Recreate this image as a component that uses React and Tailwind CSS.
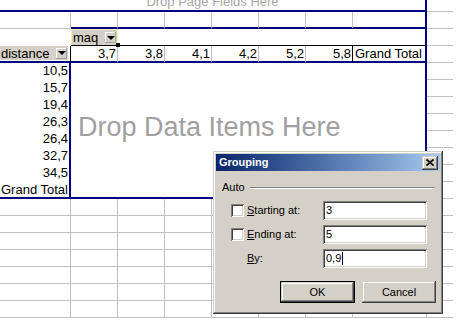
import React from 'react'

const rowValues = ['10,5', '15,7', '19,4', '26,3', '26,4', '32,7', '34,5']
const colValues = ['3,7', '3,8', '4,1', '4,2', '5,2', '5,8']

function Arrow() {
  return <span className="w-0 h-0 border-x-[4px] border-x-transparent border-t-[4px] border-t-black" />
}

function FieldButton({ label, className }) {
  return (
    <div className={`bg-[#d4d0c8] flex items-center justify-between text-[13px] leading-[15px] ${className}`}>
      <span className="pl-[1px]">{label}</span>
      <span className="w-[11px] h-[11px] mr-[1px] flex items-center justify-center shadow-[inset_-1px_-1px_#a0a0a0,inset_1px_1px_#ffffff]">
        <Arrow />
      </span>
    </div>
  )
}

const raised = 'shadow-[inset_-1px_-1px_#404040,inset_1px_1px_#d4d0c8,inset_-2px_-2px_#808080,inset_2px_2px_#ffffff]'
const sunken = 'shadow-[inset_1px_1px_#808080,inset_-1px_-1px_#ffffff,inset_2px_2px_#404040,inset_-2px_-2px_#d4d0c8]'

function Field({ label, u, value, check, caret }) {
  return (
    <div className="flex items-center h-[19px]">
      <div className="w-[15px]" />
      {check ? <div className={`w-[13px] h-[13px] bg-white ${sunken}`} /> : <div className="w-[13px]" />}
      <div className="w-[79px] pl-[3px]">
        <span className="underline">{u}</span>
        {label}
      </div>
      <div className={`w-[104px] h-[19px] bg-white flex items-center pl-[3px] ${sunken}`}>
        <span>{value}</span>
        {caret && <span className="w-[1px] h-[13px] bg-black ml-[1px]" />}
      </div>
    </div>
  )
}

function Grouping() {
  return (
    <div className={`absolute left-[213px] top-[151px] w-[230px] h-[163px] bg-[#d4d0c8] p-[3px] flex flex-col font-['Liberation_Sans',Arial,sans-serif] text-[11px] leading-[13px] text-black ${raised}`}>
      <div className="h-[17px] flex items-center justify-between pl-[3px] pr-[2px] bg-linear-to-r from-[#0a246a] to-[#a6caf0]">
        <span className="text-white font-bold">Grouping</span>
        <div className={`w-[16px] h-[14px] bg-[#d4d0c8] flex items-center justify-center ${raised}`}>
          <svg width="8" height="7" viewBox="0 0 8 7">
            <path d="M0.5 0.5 L7.5 6.5 M7.5 0.5 L0.5 6.5" stroke="black" strokeWidth="1.7" />
          </svg>
        </div>
      </div>
      <div className="flex items-center mt-[10px] pl-[6px] pr-[5px]">
        <span>Auto</span>
        <div className="flex-1 ml-[5px] h-[2px] border-t border-t-[#808080] border-b border-b-white" />
      </div>
      <div className="mt-[7px] flex flex-col gap-[5px]">
        <Field check u="S" label="tarting at:" value="3" />
        <Field check u="E" label="nding at:" value="5" />
        <Field u="B" label="y:" value="0,9" caret />
      </div>
      <div className="flex mt-[13px] pl-[64px] gap-[7px]">
        <div className="w-[75px] h-[22px] border border-black">
          <div className={`w-full h-full bg-[#d4d0c8] flex items-center justify-center ${raised}`}>OK</div>
        </div>
        <div className={`w-[74px] h-[22px] bg-[#d4d0c8] flex items-center justify-center ${raised}`}>Cancel</div>
      </div>
    </div>
  )
}

export default function App() {
  return (
    <div className="relative w-[459px] h-[333px] overflow-hidden bg-white text-black font-['Liberation_Sans',Arial,sans-serif] text-[13px] leading-[15px]">
      <div className="grid w-[453px] grid-cols-[71px_47px_47px_47px_47px_47px_47px_74px_26px] grid-rows-[12px_repeat(18,17px)]">
        {/* page field area */}
        <div className="col-span-8 border-b-2 border-r-2 border-[#000080] overflow-hidden flex justify-center">
          <span className="-mt-[6px] text-[#a6a6a6] whitespace-nowrap">Drop Page Fields Here</span>
        </div>
        <div className="border-b border-[#c0c0c0]" />

        {/* blank row */}
        <div className="border-r border-b border-[#c0c0c0]" />
        {colValues.map((v) => (
          <div key={'b' + v} className="border-r border-r-[#c0c0c0] border-b-2 border-b-[#000080]" />
        ))}
        <div className="border-r-2 border-b-2 border-[#000080]" />
        <div className="border-b border-[#c0c0c0]" />

        {/* column field row */}
        <div />
        <div className="relative border-b border-b-black bg-[#f1efb4] pt-[1px] pl-[1px] pr-[1px] flex">
          <FieldButton label="maq" className="flex-1" />
          <span className="absolute -right-[2px] -bottom-[2px] w-[4px] h-[4px] bg-black" />
        </div>
        <div className="col-span-6 border-r-2 border-r-[#000080] border-b border-b-black" />
        <div className="border-b border-[#c0c0c0]" />

        {/* header row */}
        <div className="border-r border-r-black border-b-2 border-b-[#000080]">
          <FieldButton label="distance" className="w-[68px] h-[14px]" />
        </div>
        {colValues.map((v, i) => (
          <div
            key={'h' + v}
            className={`flex items-end justify-end pr-[1px] border-b-2 border-b-[#000080] border-r ${i === 5 ? 'border-r-black' : 'border-r-[#c0c0c0]'}`}
          >
            {v}
          </div>
        ))}
        <div className="border-r-2 border-b-2 border-[#000080] pl-[2px] flex items-end whitespace-nowrap">Grand Total</div>
        <div className="border-b border-[#c0c0c0]" />

        {/* row labels + data area */}
        {rowValues.map((v, i) => (
          <React.Fragment key={'r' + v}>
            <div className="border-r-2 border-r-[#000080] flex items-end justify-end pr-[1px] pb-[2px]">{v}</div>
            {i === 0 && (
              <div className="col-span-7 row-span-8 border-r-2 border-b-2 border-[#000080] pt-[51px] pl-[7px] text-[27px] leading-[27px] text-[#a0a0a0] whitespace-nowrap">
                Drop Data Items Here
              </div>
            )}
            <div className="border-b border-[#c0c0c0]" />
          </React.Fragment>
        ))}
        <div className="border-r-2 border-b-2 border-[#000080] flex items-end pl-[1px] whitespace-nowrap">Grand Total</div>
        <div className="border-b border-[#c0c0c0]" />

        {/* empty sheet rows */}
        {Array.from({ length: 7 }).map((_, r) => (
          <React.Fragment key={'e' + r}>
            {Array.from({ length: 8 }).map((_, c) => (
              <div key={c} className="border-r border-b border-[#c0c0c0]" />
            ))}
            <div className="border-b border-[#c0c0c0]" />
          </React.Fragment>
        ))}
      </div>
      <Grouping />
    </div>
  )
}
